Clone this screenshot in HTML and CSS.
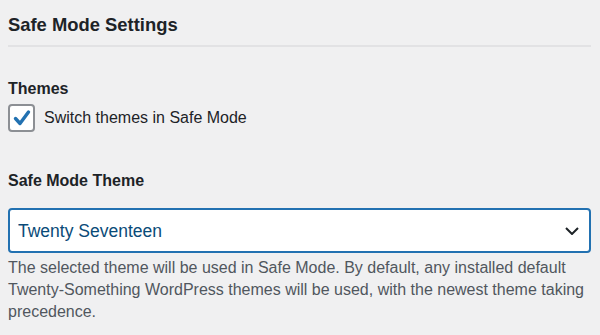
FILE: index.html
```html
<!DOCTYPE html>
<html lang="en">
<head>
  <meta charset="UTF-8" />
  <title>Safe Mode Settings</title>
  <link rel="stylesheet" href="styles.css">
</head>
<body>
  <div class="settings">
    <h2>Safe Mode Settings</h2>
    <hr>

    <!-- Themes -->
    <div class="group-title">Themes</div>
    <label class="check-row">
      <span class="check-box">
        <svg width="20" height="20" viewBox="0 0 20 20">
          <path d="M3.5 10.5 L8 15.5 L16.5 4" fill="none" stroke="#2271b1" stroke-width="3.4" stroke-linecap="round" stroke-linejoin="round"/>
        </svg>
      </span>
      Switch themes in Safe Mode
    </label>

    <!-- Theme picker -->
    <label class="field-label" for="theme">Safe Mode Theme</label>
    <div class="select-wrap">
      <select id="theme">
        <option>Twenty Seventeen</option>
        <option>Twenty Nineteen</option>
        <option>Twenty Twenty</option>
      </select>
      <svg class="chevron" width="14" height="8" viewBox="0 0 14 8">
        <path d="M1 1 L7 7 L13 1" fill="none" stroke="#1d2327" stroke-width="2"/>
      </svg>
    </div>
    <p class="description">The selected theme will be used in Safe Mode. By default, any installed default Twenty-Something WordPress themes will be used, with the newest theme taking precedence.</p>
  </div>
</body>
</html>
```

FILE: styles.css
```css
body {
  margin: 0;
  padding: 0;
  background-color: #f0f0f1;
  font-family: "Liberation Sans", Arial, sans-serif;
  color: #1d2327;
}
.settings {
  padding: 13px 9px 0 8px;
}
.settings h2 {
  margin: 0;
  font-size: 18.4px;
  line-height: 24px;
  font-weight: bold;
}
.settings hr {
  margin: 8px 0 0 0;
  border: none;
  height: 2px;
  background-color: #e2e2e4;
}
.group-title {
  margin-top: 31px;
  font-size: 16px;
  line-height: 22px;
  font-weight: bold;
}
.check-row {
  display: flex;
  align-items: center;
  gap: 9px;
  margin-top: 4px;
  font-size: 16px;
  line-height: 22px;
}
.check-box {
  width: 23px;
  height: 24px;
  border: 2px solid #8c8f94;
  border-radius: 4px;
  background-color: #fff;
  display: flex;
  align-items: center;
  justify-content: center;
}
.field-label {
  display: block;
  margin-top: 38px;
  font-size: 16px;
  line-height: 22px;
  font-weight: bold;
}
.select-wrap {
  position: relative;
  margin-top: 16px;
}
.select-wrap select {
  appearance: none;
  -webkit-appearance: none;
  display: block;
  width: 100%;
  height: 45px;
  box-sizing: border-box;
  padding: 0 40px 0 8px;
  border: 2px solid #2271b1;
  border-radius: 4px;
  background-color: #fff;
  color: #0a4b78;
  font-family: "Liberation Sans", Arial, sans-serif;
  font-size: 17.5px;
}
.chevron {
  position: absolute;
  right: 12px;
  top: 19px;
  pointer-events: none;
}
.description {
  margin: 4px 0 0 0;
  font-size: 16px;
  line-height: 22px;
  color: #50575e;
}
```
